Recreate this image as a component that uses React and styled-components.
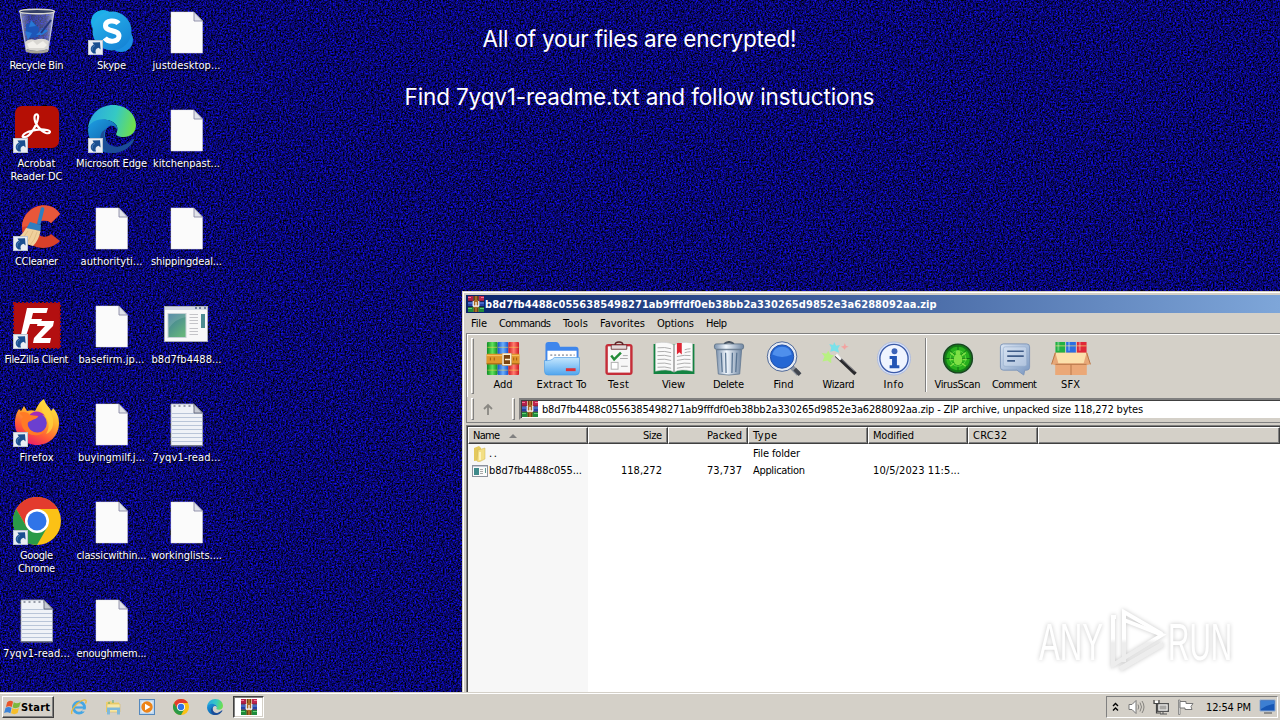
import React, { useLayoutEffect, useRef, useState } from 'react';
import styled, { createGlobalStyle } from 'styled-components';

const GlobalStyle = createGlobalStyle`
  * {
    box-sizing: border-box;
  }

  body {
    margin: 0;
    overflow: hidden;
    font-family: 'DejaVu Sans Condensed', 'DejaVu Sans', sans-serif;
    font-size: 11px;
    line-height: 13px;
    color: #000;
  }
`;

const Screen = styled.div`
  position: relative;
  display: flex;
  flex-direction: column;
  width: 1280px;
  height: 720px;
  overflow: hidden;
  background: #08056e;
`;

const Desktop = styled.main`
  position: relative;
  flex: 1;
  min-height: 0;
  overflow: hidden;
`;

const Noise = styled.svg`
  position: absolute;
  inset: 0;
  width: 100%;
  height: 100%;
`;

const IconGrid = styled.div`
  position: relative;
  display: grid;
  grid-template-rows: repeat(7, 98px);
  grid-auto-flow: column;
  grid-auto-columns: 75px;
  justify-content: start;
  padding-top: 7px;
`;

const Shortcut = styled.div`
  display: flex;
  flex-direction: column;
  align-items: center;
  width: 74px;
  color: #fff;
`;

const IconBox = styled.div`
  position: relative;
  width: 48px;
  height: 48px;
  margin-bottom: 4px;

  > svg {
    display: block;
  }
`;

const ArrowBadge = styled.svg`
  position: absolute;
  left: 0;
  bottom: 0;
`;

const Caption = styled.div`
  display: flex;
  flex-direction: column;
  align-items: center;
  margin-right: 1px;
  text-shadow: 1px 1px 1px #000;
`;

const FitSpan = styled.span`
  display: inline-block;
  white-space: pre;
`;

const Notice = styled.div`
  position: absolute;
  top: 24px;
  left: 400px;
  width: 479px;
  display: flex;
  flex-direction: column;
  align-items: center;
  gap: 28px;
  font-family: Inter, 'Liberation Sans', sans-serif;
  font-size: 22.5px;
  line-height: 30px;
  color: #fff;
`;

const Window = styled.section`
  position: absolute;
  left: 462px;
  top: 291px;
  right: 0;
  bottom: 0;
  display: flex;
  flex-direction: column;
  padding: 4px 0 0 4px;
  background: #d4d0c8;
  box-shadow: inset 1px 1px 0 #d4d0c8, inset 2px 2px 0 #fff;
`;

const TitleBar = styled.header`
  display: flex;
  align-items: center;
  height: 18px;
  padding-left: 2px;
  gap: 1px;
  color: #fff;
  font-weight: bold;
  background: linear-gradient(90deg, #0a246a, #7ea6d9);
`;

const MenuBar = styled.nav`
  display: flex;
  align-items: center;
  gap: 12px;
  height: 20px;
  padding: 0 0 0 5px;
`;

const ToolBar = styled.div`
  display: flex;
  height: 64px;
  padding: 4px 0 0 4px;
  border-top: 1px solid #808080;
  border-left: 1px solid #808080;
  box-shadow: inset 1px 1px 0 #fff;
`;

const Grip = styled.div`
  width: 3px;
  height: ${props => props.$height}px;
  border: 1px solid;
  border-color: #fff #808080 #808080 #fff;
`;

const ToolButton = styled.div`
  display: flex;
  flex-direction: column;
  align-items: center;
  width: ${props => props.$width || 55}px;
  padding-top: 3px;

  svg {
    display: block;
    height: 35px;
    margin-bottom: 2px;
  }
`;

const ToolDivider = styled.div`
  width: 2px;
  height: 54px;
  margin: 0 2px 0 4px;
  border-left: 1px solid #808080;
  border-right: 1px solid #fff;
`;

const AddressRow = styled.div`
  display: flex;
  align-items: flex-start;
  height: 26px;
  padding: 1px 0 0 4px;
  border-left: 1px solid #808080;
  border-bottom: 1px solid #808080;
`;

const UpButton = styled.div`
  width: 38px;
  padding: 5px 0 0 8px;

  svg {
    display: block;
  }
`;

const AddressField = styled.div`
  flex: 1;
  display: flex;
  align-items: center;
  height: 22px;
  margin-left: 4px;
  padding-left: 1px;
  gap: 4px;
  background: #fff;
  border: 2px solid;
  border-color: #808080 #fff #d4d0c8 #808080;
  border-right: 0;
  box-shadow: inset 1px 1px 0 #404040;
`;

const FileList = styled.div`
  flex: 1;
  margin: 2px 0 0 0;
  border-top: 1px solid #808080;
  border-left: 1px solid #808080;
  padding: 1px 0 0 1px;
  box-shadow: inset 1px 1px 0 #404040;
  background: linear-gradient(90deg, #f7f7f7 121px, #fff 121px);
`;

const ListRow = styled.div`
  display: grid;
  grid-template-columns: 120px 80px 80px 120px 100px 70px 1fr;
  height: 17px;
  margin-top: ${props => (props.$first ? '1px' : 0)};
`;

const HeadCell = styled.div`
  display: flex;
  align-items: center;
  gap: 9px;
  height: 17px;
  padding: 0 5px 0 4px;
  justify-content: ${props => (props.$right ? 'flex-end' : 'flex-start')};
  background: #d4d0c8;
  border: 1px solid;
  border-color: #fff #404040 #404040 #fff;
  box-shadow: inset -1px -1px 0 #808080;
`;

const Cell = styled.div`
  display: flex;
  align-items: center;
  gap: 1px;
  padding: 0 6px 0 ${props => (props.$name ? 4 : 5)}px;
  justify-content: ${props => (props.$right ? 'flex-end' : 'flex-start')};
`;

const Watermark = styled.svg`
  position: absolute;
  left: 1030px;
  top: 600px;
  filter: drop-shadow(0 0 2px rgba(0, 0, 0, 0.22));
`;

const TaskBar = styled.footer`
  position: relative;
  display: flex;
  align-items: center;
  height: 28px;
  padding: 2px 2px 0 2px;
  background: #d4d0c8;
  box-shadow: inset 0 1px 0 #d4d0c8, inset 0 2px 0 #fff;
`;

const StartButton = styled.button`
  display: flex;
  align-items: center;
  gap: 0;
  width: 52px;
  height: 22px;
  padding: 0 0 0 1px;
  font: bold 11px/13px 'DejaVu Sans Condensed', 'DejaVu Sans', sans-serif;
  color: #000;
  background: #d4d0c8;
  border: 1px solid;
  border-color: #fff #404040 #404040 #fff;
  box-shadow: inset -1px -1px 0 #808080;
`;

const QuickLaunch = styled.div`
  display: flex;
  gap: 18px;
  margin: 0 10px 0 17px;
`;

const TaskButton = styled.div`
  display: flex;
  align-items: center;
  justify-content: center;
  width: 31px;
  height: 22px;
  background: #fff;
  border: 1px solid;
  border-color: #404040 #fff #fff #404040;
  box-shadow: inset 1px 1px 0 #808080, inset -1px -1px 0 #d4d0c8;
`;

const Tray = styled.div`
  display: flex;
  align-items: center;
  width: 172px;
  height: 22px;
  margin-left: auto;
  padding-left: 5px;
  border: 1px solid;
  border-color: #808080 #fff #fff #808080;
`;

const TrayIcon = styled.svg`
  margin-right: ${props => props.$gap}px;
`;

// Spreads the letters of a text so that it takes exactly the given width
const FitText = ({ width, children }) => {
  const ref = useRef(null);
  const [spacing, setSpacing] = useState(0);

  useLayoutEffect(() => {
    const natural = ref.current.getBoundingClientRect().width;
    setSpacing((width - natural) / Math.max(1, children.length - 1));
  }, []);

  return (
    <FitSpan ref={ref} style={{ letterSpacing: spacing, marginRight: -spacing }}>
      {children}
    </FitSpan>
  );
};

const ShortcutArrow = () => (
  <ArrowBadge width="15" height="15" viewBox="0 0 15 15">
    <rect x=".5" y=".5" width="14" height="14" fill="#e9edf3" stroke="#bcc5d2" />
    <path d="M5.500 13.500C1.800 11.500 1.800 6.500 5.800 4.800L4.500 2.500L12 2.200L12.600 9.500L10.600 7.800C7.800 8.600 6.800 10.500 8 13.500Z" fill="#1a4f90" />
    <path d="M4.200 10.500C3.800 8 5 6.200 7 5.500" fill="none" stroke="#5b8cc4" strokeWidth=".8" />
  </ArrowBadge>
);

const RecycleBin = () => (
  <svg width="48" height="48" viewBox="0 0 48 48">
    <defs>
      <linearGradient id="bin" x1="0" x2="1">
        <stop offset="0" stopColor="#c3cbe0" stopOpacity=".75" />
        <stop offset=".3" stopColor="#5d6bb0" stopOpacity=".55" />
        <stop offset=".75" stopColor="#7c88c0" stopOpacity=".6" />
        <stop offset="1" stopColor="#d5dae8" stopOpacity=".85" />
      </linearGradient>
    </defs>
    <path d="M6.500 4.500L41.500 4.500L35.500 44Q24 48 12.500 44Z" fill="url(#bin)" />
    <path d="M13 17L20 15L26 21L25 30L17 31L13 26Z" fill="#1d55b8" />
    <path d="M18 13l5 6-7 1zM12 24l7 2-4 7zM23 28l7-7 5 3-6 4z" fill="#2878d6" />
    <path d="M28 26L38 13" stroke="#25357d" strokeWidth="2" />
    <path d="M12 35Q16 31 22 33Q30 30 36 34L35 42Q24 46 13 42Z" fill="#d8d6d2" />
    <path d="M14 37l6-3 4 4 6-4 4 4-3 3H16z" fill="#f1efeb" />
    <path d="M12.500 42Q24 46 35.500 42L35 45Q24 48 13 45Z" fill="#a6a398" />
    <ellipse cx="24" cy="4.500" rx="17.500" ry="2.300" fill="#343f66" stroke="#d9d8cf" strokeWidth="1.400" />
    <path d="M7.300 6L13.300 43M40.700 6L35 43" stroke="#dde1ee" strokeOpacity=".7" />
  </svg>
);

const Skype = () => (
  <svg width="48" height="48" viewBox="0 0 48 48">
    <defs>
      <linearGradient id="sky" x1="0" y1="0" x2=".7" y2="1">
        <stop offset="0" stopColor="#28b9ee" />
        <stop offset="1" stopColor="#1584d6" />
      </linearGradient>
    </defs>
    <circle cx="15" cy="15" r="12" fill="#1cafea" />
    <circle cx="33" cy="33" r="12" fill="#1a8fe0" />
    <circle cx="24" cy="24" r="19.500" fill="url(#sky)" />
    <path d="M30.500 16.500C28 13 17.500 12.500 17.500 18.800C17.500 25.500 31 22 31 29C31 35.500 20 35.500 16.800 31" fill="none" stroke="#fff" strokeWidth="5" />
  </svg>
);

const Acrobat = () => (
  <svg width="48" height="48" viewBox="0 0 48 48">
    <rect x="2" y="1" width="44" height="42" rx="7" fill="#b50f05" />
    <path d="M12 32C7 33 10 28 18 26C23 24.500 29 24 34 25C39 26 37 29 33 28C27 26 21 18 21.500 12C22 8 26 8.500 25 13C24 20 17 32 12 32Z" fill="none" stroke="#fff" strokeWidth="2.200" />
  </svg>
);

const Edge = ({ size = 48, id = 'e' }) => (
  <svg width={size} height={size} viewBox="0 0 48 48">
    <defs>
      <linearGradient id={`${id}t`} x1="0" y1=".3" x2="1" y2=".5">
        <stop offset="0" stopColor="#2aa7e0" />
        <stop offset=".55" stopColor="#35c9c4" />
        <stop offset="1" stopColor="#6fe04b" />
      </linearGradient>
      <linearGradient id={`${id}b`} x1="0" y1="0" x2=".7" y2="1">
        <stop offset="0" stopColor="#1e9fe3" />
        <stop offset="1" stopColor="#0c59a4" />
      </linearGradient>
    </defs>
    <path d="M0 23C2 9 12 0 25 0C39 0 48 10 48 20C48 28 42 32 36 32C30 32 27 30 28.500 28C32 21 26 16 19 15C11 14 4 17 0 23Z" fill={`url(#${id}t)`} />
    <path d="M0 24C2 17 9 13.500 17 14.500C25 15.500 30 20 29.500 25C26 18 18 20 17 28C16 38 28 48 22 48C9 47 0 37 0 24Z" fill={`url(#${id}b)`} />
    <path d="M18.500 23C12 31 20 45 33 41C38 39.500 43 36 45 34C46 33 46.500 35 45.500 36.500C40 45 31 49 22 48C13 46 10 34 14 27Z" fill="#1b4c98" />
  </svg>
);

const CCleaner = () => (
  <svg width="48" height="48" viewBox="0 0 48 48">
    <path d="M47 11L38 20C33 15 23 18 23 26C23 34 34 36 38 31L47 38C34 51 9 45 9 25C9 2 37-5 47 11Z" fill="#d8402a" />
    <path d="M47 11L38 20C33 15 23 18 23 22L9 24C10 3 37-5 47 11Z" fill="#e8573a" />
    <path d="M29.500 6L26 20" stroke="#2d7fc2" strokeWidth="3.600" strokeLinecap="round" />
    <path d="M17 19L28 22L27.500 28L13 26Z" fill="#2f7ec0" />
    <path d="M13 25L27.500 28Q26 37 20 43Q9 40 1 37Q9 33 13 25Z" fill="#f0d09c" />
    <path d="M15 28Q11 35 6 38M20 28Q17 36 13 41M24 29Q22 37 17 42" stroke="#dbb47a" strokeWidth=".7" fill="none" />
  </svg>
);

const FileZilla = () => (
  <svg width="48" height="48" viewBox="0 0 48 48">
    <rect x="1" y="2" width="46" height="45" fill="#b30f10" stroke="#a30d0e" strokeWidth="2" strokeDasharray="2 2" />
    <path d="M14 7H35L33.500 12H20L18.500 18H29L27.500 23H17L12 38H7Z" fill="#fff" />
    <path d="M25 20H41L40 25L28 37H38L37 42H20L21 37L32 25H24Z" fill="#fff" />
  </svg>
);

const Firefox = () => (
  <svg width="48" height="48" viewBox="0 0 48 48">
    <defs>
      <linearGradient id="fox" x1=".8" y1="0" x2=".3" y2="1">
        <stop offset="0" stopColor="#fff04a" />
        <stop offset=".4" stopColor="#ffb02e" />
        <stop offset=".72" stopColor="#ff5a36" />
        <stop offset="1" stopColor="#e8186e" />
      </linearGradient>
    </defs>
    <path d="M31 0C33 7 37 8 38 12C40 10 40 9 40 9C45 14 46 20 46 24C46 37 36 46 24 46C12 46 2 37 2 24C2 17 4 13 6 10L8 12L11 7L14 12C17 11 20 11 22 12C24 8 27 2 31 0Z" fill="url(#fox)" />
    <circle cx="24" cy="24" r="9.800" fill="#6b3fd0" />
    <path d="M16 17C19 11 28 11 32 17C29 15 27 16 26 18Z" fill="#a22bb8" />
    <path d="M6 14C10 12 15 13 17 16L25 17C25 20 20 20 18 22C15 22 14 25 15 27C18 35 28 35 32 31C29 39 13 38 9 27C8 23 8 20 10 18Z" fill="#ff7a26" />
    <path d="M31 1C32 10 42 14 40 26C39 31 36 34 33 35C37 29 36 23 33 18C30 14 26 10 31 1Z" fill="#ffd23c" fillOpacity=".8" />
  </svg>
);

const Chrome = ({ size = 48 }) => (
  <svg width={size} height={size} viewBox="0 0 48 48">
    <circle cx="24" cy="24" r="24" fill="#fbc116" />
    <path d="M24 12H44.800A24 24 0 0 0 3.200 12L13.600 30Z" fill="#e33b2e" />
    <path d="M3.200 12L13.600 30L34.400 30L24 48A24 24 0 0 1 3.200 12Z" fill="#2a9a48" />
    <circle cx="24" cy="24" r="12" fill="#fff" />
    <circle cx="24" cy="24" r="9.500" fill="#2f74e8" />
  </svg>
);

const Page = () => (
  <svg width="48" height="48" viewBox="0 0 48 48">
    <path d="M8 5H31L39.500 14V46H8Z" fill="#fbfbfb" stroke="#d8d8e0" strokeWidth=".5" />
    <path d="M31 5V14H39.500Z" fill="#e1e3ea" stroke="#7d7f9c" strokeWidth=".8" />
  </svg>
);

const TextPage = () => (
  <svg width="48" height="48" viewBox="0 0 48 48">
    <path d="M8 5H31L39.500 14V47H8Z" fill="#eff2f7" stroke="#9fa5b4" strokeWidth=".8" />
    <path d="M9 14.500H39M9 18.500H39M9 22.500H39M9 26.500H39M9 30.500H39M9 34.500H39M9 38.500H39M9 42.500H39" stroke="#b9c5d8" />
    <path d="M10.500 7H31" stroke="#7b8090" strokeWidth="1.500" strokeDasharray="2 3" />
    <path d="M31 5V14H39.500Z" fill="#c5c9d2" stroke="#62677a" strokeWidth=".9" />
    <path d="M8 46.500H39.500" stroke="#777d8c" />
  </svg>
);

const AppWindow = ({ width = 48, height = 48, viewBox = '0 0 48 48', id = 'app' }) => (
  <svg width={width} height={height} viewBox={viewBox}>
    <defs>
      <linearGradient id={id} x1="0" y1="0" x2=".7" y2="1">
        <stop offset="0" stopColor="#3c789c" />
        <stop offset="1" stopColor="#66b57c" />
      </linearGradient>
    </defs>
    <rect x="1.500" y="5.500" width="43" height="35" fill="#f8f8f8" stroke="#a9adb5" />
    <path d="M2 7.500H44" stroke="#d5dae3" strokeWidth="3" />
    <path d="M32 7H34M36 7H38M41 7H43" stroke="#4e5f86" strokeWidth="1.500" />
    <rect x="5" y="12.500" width="18" height="24" fill={`url(#${id})`} stroke="#c5d0d4" />
    <path d="M6 27Q12 18 23 16V13H6Z" fill="#fff" fillOpacity=".15" />
    <path d="M26.500 13.500H35M26.500 16.500H35M26.500 19.500H35M26.500 22.500H35M26.500 27.500H35M26.500 30.500H35M26.500 33.500H35" stroke="#c4c4c8" />
    <rect x="38" y="13" width="4" height="14" fill="#4c8c92" />
  </svg>
);

const AppSmall = () => (
  <svg width="16" height="14" viewBox="0 0 16 14">
    <rect x=".5" y="1.500" width="15" height="11" fill="#fafafa" stroke="#8d929c" />
    <path d="M1 2.500H15" stroke="#c3c9d6" />
    <rect x="2" y="4" width="5" height="7" fill="#3f8a8a" />
    <path d="M8 5.500H11M8 7.500H11M8 9.500H11" stroke="#aaa" />
    <path d="M13.500 4V9" stroke="#5c9a96" />
  </svg>
);

const RarSmall = ({ size = 16 }) => (
  <svg width={size} height={size} viewBox="0 0 16 16">
    <path d="M0 0H5V5H0Z" fill="#b3204a" />
    <path d="M11 0H16V5H11Z" fill="#c0264e" />
    <path d="M0 5.500H16V10.500H0Z" fill="#2443a4" />
    <path d="M0 11H16V16H0Z" fill="#1f8a3c" />
    <path d="M5.500 0H10.500V16H5.500Z" fill="#a96a24" />
    <path d="M0 1.500H3M13 1.500H16" stroke="#f07c9a" />
    <path d="M0 7H4M12 7H16" stroke="#6a90e8" />
    <path d="M0 12.500H4M12 12.500H16" stroke="#63d070" />
    <path d="M5.200 5V10.200H10.800V5M8 6V10" stroke="#fff" strokeWidth="1.200" fill="none" />
    <path d="M6.500 0V4M9.500 0V4M6.500 12V16M9.500 12V16" stroke="#593410" strokeWidth=".7" />
    <path d="M0 5.200H4.500M11.500 5.200H16M0 10.700H5M11 10.700H16" stroke="#220f2a" strokeWidth=".7" />
  </svg>
);

const Add = () => (
  <svg width="36" height="36" viewBox="0 0 36 36">
    <defs>
      {[['bg', '#0e8c23', '#62e35e'], ['bb', '#1553cf', '#6db0fa'], ['br', '#cf1620', '#ff7d6f']].map(([id, dark, light]) => (
        <linearGradient key={id} id={id} x1="0" x2="1">
          <stop offset="0" stopColor={dark} />
          <stop offset=".5" stopColor={light} />
          <stop offset="1" stopColor={dark} />
        </linearGradient>
      ))}
    </defs>
    <rect x="1.500" y="1" width="11" height="34" rx="1" fill="url(#bg)" />
    <rect x="12.500" y="1" width="11" height="34" rx="1" fill="url(#bb)" />
    <rect x="23.500" y="1" width="11" height="34" rx="1" fill="url(#br)" />
    <path d="M2 6.500H12M13 6.500H23M24 6.500H34M2 30H12M13 30H23M24 30H34" stroke="#f4d44e" strokeOpacity=".6" />
    <rect x="1" y="13" width="34" height="11" rx="1.500" fill="#e0962c" />
    <path d="M1 15H35" stroke="#f8c468" />
    <path d="M1 23.500H35" stroke="#9a5d12" />
    <path d="M5 17V20M9 17V20M29 17V20M32 17V20" stroke="#9f5710" />
    <path d="M17 12.500H27V25.500H17Z" fill="#7c4511" />
    <path d="M18 13.500H26V24.500H18ZM20 19H26" stroke="#fff2d2" strokeWidth="1.600" fill="none" />
  </svg>
);

const Extract = () => (
  <svg width="38" height="36" viewBox="0 0 38 36">
    <defs>
      <linearGradient id="fold" x1="0" y1="0" x2="0" y2="1">
        <stop offset="0" stopColor="#c4e7fe" />
        <stop offset="1" stopColor="#50a5ee" />
      </linearGradient>
    </defs>
    <path d="M2 33V4Q2 1 5 1H13Q15 1 16 3L17 6H33Q36 6 36 9V33Z" fill="#3e86ec" />
    <path d="M4 10H34V22H4Z" fill="#fff" />
    <path d="M7 14.500H32" stroke="#a4a9b3" strokeWidth="2" strokeDasharray="2 2" />
    <path d="M1 20Q8 21 11 17H37V31Q37 35 33 35H5Q1 35 1 31Z" fill="url(#fold)" stroke="#4c9ce5" strokeWidth=".7" />
    <rect x="23" y="28" width="10" height="3" fill="#dc3038" />
  </svg>
);

const Test = () => (
  <svg width="30" height="36" viewBox="0 0 30 36">
    <rect x="1" y="3" width="28" height="32" rx="3" fill="#c52d38" />
    <rect x="3.500" y="5.500" width="23" height="27" fill="#f7f7f7" />
    <path d="M7 4H23V8.500H7Z" fill="#e5dada" stroke="#571e22" strokeWidth=".8" />
    <path d="M11 4Q11 1 15 1Q19 1 19 4" fill="none" stroke="#5d2024" strokeWidth="1.500" />
    <path d="M7 15L10 19L17 12" stroke="#238b38" strokeWidth="2.500" fill="none" />
    <path d="M19 15H24M16 18H24M17 26H24" stroke="#aaa" />
    <rect x="7" y="22" width="7" height="7" fill="#fff" stroke="#b0b0b0" />
  </svg>
);

const View = () => (
  <svg width="44" height="36" viewBox="0 0 44 36">
    <path d="M1 3H43V34H1Z" fill="#138341" />
    <path d="M3 2Q16 0 22 4Q28 0 41 2V31Q28 28 22 32Q16 28 3 31Z" fill="#fafafa" stroke="#c6c6c6" strokeWidth=".6" />
    <path d="M22 4V32" stroke="#929292" strokeWidth="1.400" />
    <path d="M5 7Q13 6 19 8M5 11Q13 10 19 12M5 15Q13 14 19 16M5 19Q13 18 19 20M5 23Q13 22 19 24M5 27Q13 26 19 28M25 16Q33 14 39 15M25 20Q33 18 39 19M25 24Q33 22 39 23M25 28Q33 26 39 27M33 9Q36 8 39 8M33 12Q36 11 39 11" stroke="#ababab" fill="none" />
    <path d="M25 2H30V14L27.500 11.500L25 14Z" fill="#df2534" />
  </svg>
);

const Delete = () => (
  <svg width="32" height="36" viewBox="0 0 32 36">
    <defs>
      <linearGradient id="can" x1="0" x2="1">
        <stop offset="0" stopColor="#7c92ad" />
        <stop offset=".4" stopColor="#f2f8fe" />
        <stop offset="1" stopColor="#6f86a2" />
      </linearGradient>
    </defs>
    <path d="M11 3Q16-1 21 3" fill="none" stroke="#4b5563" strokeWidth="2" />
    <path d="M3 9H29L27 34Q16 36 5 34Z" fill="url(#can)" stroke="#62778f" strokeWidth=".8" />
    <path d="M8 12L9 32M12.500 12L13 33M19.500 12L19 33M24 12L23 32" stroke="#587391" strokeWidth="1.300" />
    <rect x="1" y="3" width="30" height="5.500" rx="2" fill="url(#can)" stroke="#546980" strokeWidth=".8" />
  </svg>
);

const Find = () => (
  <svg width="36" height="36" viewBox="0 0 36 36">
    <path d="M24 25L33 34" stroke="#8c929c" strokeWidth="5" />
    <path d="M29 29L34.500 34.500" stroke="#42464e" strokeWidth="4" />
    <circle cx="16" cy="16" r="13.500" fill="#2567d4" stroke="#e5eaf3" strokeWidth="3" />
    <circle cx="16" cy="16" r="15.200" fill="none" stroke="#294b89" strokeWidth=".8" />
    <circle cx="16" cy="16" r="12" fill="none" stroke="#214da3" />
    <path d="M6 14Q8 6 16 6Q24 6 26 14Q16 19 6 14Z" fill="#4f8fec" />
  </svg>
);

const Wizard = () => (
  <svg width="36" height="36" viewBox="0 0 36 36">
    <path d="M15 15L35 34" stroke="#29292c" strokeWidth="3.600" />
    <path d="M15 14L20 19" stroke="#fafafa" strokeWidth="3" />
    <path d="M20 18L34 31" stroke="#88888e" />
    <path d="M13 1L15 5L19 4L17 8L18 12L13 10L9 11L10 7L8 3L12 4Z" fill="#7ae1e9" />
    <path d="M7 10L9 14L13 15L10 18L10 23L6 20L1 21L3 16L0 12L5 13Z" fill="#b8f082" />
    <path d="M24 2L25 5L28 6L25 7L24 9L22 7L20 6L23 5Z" fill="#f2a3a0" />
  </svg>
);

const Info = () => (
  <svg width="36" height="36" viewBox="0 0 36 36">
    <circle cx="18" cy="18" r="17" fill="#d7e2fa" stroke="#aebbdc" />
    <circle cx="18" cy="18" r="14.500" fill="#eff4ff" stroke="#3c5ba8" strokeWidth="1.400" />
    <circle cx="18.500" cy="10.500" r="3" fill="#3b62b8" />
    <path d="M13.500 15.500H21V25H23.500V28H13.500V25H16V18.500H13.500Z" fill="#2355b5" />
  </svg>
);

const VirusScan = () => (
  <svg width="34" height="36" viewBox="0 0 34 36">
    <circle cx="17" cy="18" r="16.500" fill="#cbd6ce" />
    <circle cx="17" cy="18" r="14.800" fill="#137a18" stroke="#1c4321" strokeWidth="1.500" />
    <circle cx="17" cy="18" r="12" fill="#28b01d" />
    <path d="M17 5V31M4 18H30M8 9L26 27M26 9L8 27" stroke="#0e6d13" />
    <circle cx="17" cy="18" r="8" fill="none" stroke="#5bd340" />
    <ellipse cx="17" cy="19" rx="4.500" ry="6" fill="#7fe045" />
    <circle cx="17" cy="12" r="2.500" fill="#7fe045" />
    <path d="M13 15L9 12M21 15L25 12M12 19H8M22 19H26M13 23L9 26M21 23L25 26" stroke="#7fe045" strokeWidth="1.500" />
  </svg>
);

const Comment = () => (
  <svg width="34" height="36" viewBox="0 0 34 36">
    <defs>
      <linearGradient id="talk" x1="0" y1="0" x2="1" y2="1">
        <stop offset="0" stopColor="#dbe6f4" />
        <stop offset="1" stopColor="#7896c0" />
      </linearGradient>
    </defs>
    <path d="M5 3H29Q32 3 32 6V27Q32 30 29 30H27L26 35L19 30H5Q2 30 2 27V6Q2 3 5 3Z" fill="url(#talk)" stroke="#7f97ba" />
    <rect x="5" y="6" width="24" height="20" rx="2" fill="#d6e2f2" fillOpacity=".5" stroke="#93aaca" strokeWidth=".6" />
    <path d="M9 10.500H26M9 15.500H26M9 20.500H17" stroke="#3f5c88" strokeWidth="1.700" />
  </svg>
);

const Sfx = () => (
  <svg width="42" height="36" viewBox="0 0 42 36">
    <rect x="5" y="1" width="10" height="14" fill="#22b144" />
    <rect x="16" y="1" width="10" height="14" fill="#2a6ee2" />
    <rect x="27" y="1" width="10" height="14" fill="#df2838" />
    <path d="M5 5H15M27 5H37M16 5H26" stroke="#f5dc78" strokeOpacity=".7" />
    <path d="M8 1V10M19 1V10M30 1V10" stroke="#fff" strokeOpacity=".3" strokeWidth="2" />
    <path d="M4 12H38L41 24L37 25V35H5V25L1 24Z" fill="#e7a878" />
    <path d="M5 12H37L34 23H8Z" fill="#fbe0ac" />
    <path d="M5 24H37V35H5Z" fill="#eba877" />
    <path d="M21 24V35M5 24H37M5 12L1 24M37 12L41 24" stroke="#b77749" />
  </svg>
);

const Folder = () => (
  <svg width="16" height="16" viewBox="0 0 16 16">
    <path d="M2 2L7 0L9 2V14L2 15Z" fill="#e4c95c" />
    <path d="M6 4L13 2V13L7 16L5 15Z" fill="#f3df84" stroke="#cfb450" strokeWidth=".5" />
    <path d="M8 6V14" stroke="#fff8cf" strokeWidth="1.500" />
  </svg>
);

const StartFlag = () => (
  <svg width="17" height="17" viewBox="0 0 16 16">
    <path d="M3 3Q6 .5 8.500 2.500L7.300 7.500Q5 6 1.800 7.500Z" fill="#e8552a" />
    <path d="M9.200 3Q12 5 15.700 2.800L14.300 7.600Q11 9.500 8 7.800Z" fill="#7cb83c" />
    <path d="M1.500 8.200Q4.500 6.800 7.100 8.300L6 13.300Q3 11.500.1 13.200Z" fill="#3b83d8" />
    <path d="M7.800 8.500Q11 10.400 14.100 8.400L12.800 13.200Q10 15.200 6.600 13.500Z" fill="#f6be2b" />
  </svg>
);

const Explorer = () => (
  <svg width="16" height="16" viewBox="0 0 16 16">
    <circle cx="8" cy="8.500" r="5.600" fill="none" stroke="#45a6e4" strokeWidth="2.800" />
    <path d="M4 8.500H14" stroke="#45a6e4" strokeWidth="2.200" />
    <path d="M11.500 10.600H16V12.500H11Z" fill="#d4d0c8" />
    <path d="M1 15C-1 12 5 4 11 1.500C15 0 16 1.500 14.500 4.500" fill="none" stroke="#e9b93c" strokeWidth="1.300" />
  </svg>
);

const Library = () => (
  <svg width="16" height="16" viewBox="0 0 16 16">
    <path d="M1 3L6 2L7 3.500H14V13H1Z" fill="#edcf6e" />
    <path d="M2 5H15V13H2Z" fill="#f8e7a4" stroke="#d8b650" strokeWidth=".5" />
    <path d="M2 8.500H15V15.500H12V11H5V15.500H2Z" fill="#80b9d9" />
    <path d="M8 1V4M4 3V5" stroke="#61aa6b" />
  </svg>
);

const Player = () => (
  <svg width="16" height="16" viewBox="0 0 16 16">
    <rect x=".5" y=".5" width="15" height="15" fill="#bcd6ee" stroke="#5488bd" />
    <rect x="2.500" y="2.500" width="11" height="11" fill="#e9f0f6" />
    <circle cx="8" cy="8" r="5.700" fill="#ed8418" />
    <path d="M6 4.700L11.500 8L6 11.300Z" fill="#fff" />
  </svg>
);

const shortcuts = [
  { icon: <RecycleBin />, lines: [['Recycle Bin', 54]] },
  { icon: <Acrobat />, link: true, lines: [['Acrobat', 38], ['Reader DC', 52]] },
  { icon: <CCleaner />, link: true, lines: [['CCleaner', 43]] },
  { icon: <FileZilla />, link: true, lines: [['FileZilla Client', 64]] },
  { icon: <Firefox />, link: true, lines: [['Firefox', 34]] },
  { icon: <Chrome />, link: true, lines: [['Google', 33], ['Chrome', 37]] },
  { icon: <TextPage />, lines: [['7yqv1-read...', 67]] },
  { icon: <Skype />, link: true, lines: [['Skype', 29]] },
  { icon: <Edge />, link: true, lines: [['Microsoft Edge', 71]] },
  { icon: <Page />, lines: [['authorityti...', 62]] },
  { icon: <Page />, lines: [['basefirm.jp...', 66]] },
  { icon: <Page />, lines: [['buyingmilf.j...', 67]] },
  { icon: <Page />, lines: [['classicwithin...', 70]] },
  { icon: <Page />, lines: [['enoughmem...', 70]] },
  { icon: <Page />, lines: [['justdesktop...', 68]] },
  { icon: <Page />, lines: [['kitchenpast...', 67]] },
  { icon: <Page />, lines: [['shippingdeal...', 71]] },
  { icon: <AppWindow />, lines: [['b8d7fb4488...', 70]] },
  { icon: <TextPage />, lines: [['7yqv1-read...', 68]] },
  { icon: <Page />, lines: [['workinglists....', 71]] },
];

const menus = [['File', 16], ['Commands', 52], ['Tools', 25], ['Favorites', 45], ['Options', 37], ['Help', 21]];

const tools = [
  { icon: <Add />, label: ['Add', 19], width: 58 },
  { icon: <Extract />, label: ['Extract To', 50], width: 59 },
  { icon: <Test />, label: ['Test', 21] },
  { icon: <View />, label: ['View', 23] },
  { icon: <Delete />, label: ['Delete', 31] },
  { icon: <Find />, label: ['Find', 20] },
  { icon: <Wizard />, label: ['Wizard', 32] },
  { icon: <Info />, label: ['Info', 20] },
];

const extraTools = [
  { icon: <VirusScan />, label: ['VirusScan', 46], width: 57 },
  { icon: <Comment />, label: ['Comment', 45], width: 57 },
  { icon: <Sfx />, label: ['SFX', 19] },
];

const renderTool = ({ icon, label, width }) => (
  <ToolButton key={label[0]} $width={width}>
    {icon}
    <FitText width={label[1]}>{label[0]}</FitText>
  </ToolButton>
);

const ArchiveWindow = () => (
  <Window>
    <TitleBar>
      <RarSmall />
      <FitText width={451}>b8d7fb4488c0556385498271ab9fffdf0eb38bb2a330265d9852e3a6288092aa.zip</FitText>
    </TitleBar>
    <MenuBar>
      {menus.map(([name, width]) => (
        <FitText key={name} width={width}>{name}</FitText>
      ))}
    </MenuBar>
    <ToolBar>
      <Grip $height={56} />
      {tools.map(renderTool)}
      <ToolDivider />
      {extraTools.map(renderTool)}
    </ToolBar>
    <AddressRow>
      <Grip $height={22} />
      <UpButton>
        <svg width="12" height="14" viewBox="0 0 12 14">
          <path d="M6 12V2M2 6L6 2L10 6" fill="none" stroke="#8a8883" strokeWidth="1.800" />
        </svg>
      </UpButton>
      <Grip $height={22} />
      <AddressField>
        <RarSmall />
        <FitText width={601}>
          {'b8d7fb4488c0556385498271ab9fffdf0eb38bb2a330265d9852e3a6288092aa.zip - ZIP archive, unpacked size 118,272 bytes'}
        </FitText>
      </AddressField>
    </AddressRow>
    <FileList>
      <ListRow>
        <HeadCell>
          <FitText width={27}>Name</FitText>
          <svg width="8" height="4" viewBox="0 0 8 4">
            <path d="M0 4L4 0L8 4Z" fill="#808080" />
          </svg>
        </HeadCell>
        <HeadCell $right><FitText width={19}>Size</FitText></HeadCell>
        <HeadCell $right><FitText width={35}>Packed</FitText></HeadCell>
        <HeadCell><FitText width={24}>Type</FitText></HeadCell>
        <HeadCell><FitText width={41}>Modified</FitText></HeadCell>
        <HeadCell><FitText width={34}>CRC32</FitText></HeadCell>
        <HeadCell />
      </ListRow>
      <ListRow $first>
        <Cell $name><Folder /> <FitText width={8}>..</FitText></Cell>
        <Cell />
        <Cell />
        <Cell><FitText width={47}>File folder</FitText></Cell>
      </ListRow>
      <ListRow>
        <Cell $name>
          <AppSmall />
          <FitText width={93}>b8d7fb4488c055...</FitText>
        </Cell>
        <Cell $right><FitText width={41}>118,272</FitText></Cell>
        <Cell $right><FitText width={35}>73,737</FitText></Cell>
        <Cell><FitText width={52}>Application</FitText></Cell>
        <Cell><FitText width={87}>10/5/2023 11:5...</FitText></Cell>
      </ListRow>
    </FileList>
  </Window>
);

const App = () => {
  return (
    <Screen>
      <GlobalStyle />
      <Desktop>
        <Noise>
          <filter id="grain" x="0" y="0" width="100%" height="100%" colorInterpolationFilters="sRGB">
            <feTurbulence type="fractalNoise" baseFrequency="0.6" numOctaves="2" seed="4" />
            <feColorMatrix values="0.15 0 0 0 -0.04  0.1 0 0 0 -0.02  1.8 0 0 0 -0.47  0 0 0 0 1" />
          </filter>
          <rect width="100%" height="100%" filter="url(#grain)" />
        </Noise>
        <Notice>
          <FitText width={314}>All of your files are encrypted!</FitText>
          <FitText width={470}>Find 7yqv1-readme.txt and follow instuctions</FitText>
        </Notice>
        <IconGrid>
          {shortcuts.map(({ icon, link, lines }, i) => (
            <Shortcut key={i}>
              <IconBox>
                {icon}
                {link && <ShortcutArrow />}
              </IconBox>
              <Caption>
                {lines.map(([text, width]) => (
                  <FitText key={text} width={width}>{text}</FitText>
                ))}
              </Caption>
            </Shortcut>
          ))}
        </IconGrid>
        <ArchiveWindow />
        <Watermark width="250" height="80" viewBox="0 0 250 80">
          <defs>
            <linearGradient id="fade" gradientUnits="userSpaceOnUse" x1="0" y1="39" x2="0" y2="43">
              <stop offset="0" stopColor="#fff" />
              <stop offset="1" stopColor="#ededed" />
            </linearGradient>
          </defs>
          <g fill="url(#fade)" fontFamily="Liberation Sans, sans-serif" fontSize="52">
            <text transform="translate(9 60) scale(.6 1)">ANY</text>
            <text transform="translate(138 60) scale(.57 1)">RUN</text>
          </g>
          <g fill="none" stroke="url(#fade)" strokeWidth="4">
            <path d="M94 62V12L132 34" />
            <path d="M86 17H83V65L94 58L132 35L94 20" />
            <path d="M90 69L133 44" strokeWidth="5" />
          </g>
        </Watermark>
      </Desktop>
      <TaskBar>
        <StartButton>
          <StartFlag />
          <FitText width={29}>Start</FitText>
        </StartButton>
        <QuickLaunch>
          <Explorer />
          <Library />
          <Player />
          <Chrome size={16} />
          <Edge size={16} id="es" />
        </QuickLaunch>
        <TaskButton>
          <RarSmall />
        </TaskButton>
        <Tray>
          <TrayIcon $gap={9} width="7" height="10" viewBox="0 0 7 10">
            <path d="M1 4L3.500 1.500L6 4M1 8.500L3.500 6L6 8.500" fill="none" stroke="#000" strokeWidth="1.400" />
          </TrayIcon>
          <TrayIcon $gap={8} width="17" height="16" viewBox="0 0 17 16">
            <path d="M1 5.500H4L8 1.500V14.500L4 10.500H1Z" fill="#fff" stroke="#777" />
            <path d="M10 5.500Q11.500 8 10 10.500M12 3.500Q15 8 12 12.500M14 2Q18 8 14 14" fill="none" stroke="#85837f" />
          </TrayIcon>
          <TrayIcon $gap={8} width="16" height="16" viewBox="0 0 16 16">
            <rect x="4.500" y="4.500" width="11" height="8" fill="#a8a7a4" stroke="#555" />
            <path d="M6 6H14V11H6Z" fill="none" stroke="#eee" />
            <path d="M7 15H14M10 13V15" stroke="#555" />
            <path d="M1 1V4.500H6V1M3.500 4V14H8" fill="none" stroke="#444" strokeWidth="1.200" />
            <path d="M2 2H5V4H2Z" fill="#fff" />
          </TrayIcon>
          <TrayIcon $gap={12} width="17" height="16" viewBox="0 0 17 16">
            <path d="M1.500 1V15.500H3V1Z" fill="#fff" stroke="#777" strokeWidth=".8" />
            <path d="M3 2.500H9V4.500H16L14 7.500L15 10.500H8V9H3Z" fill="#fff" stroke="#777" />
          </TrayIcon>
          <FitText width={45}>12:54 PM</FitText>
          <TrayIcon $gap={0} width="25" height="16" viewBox="-9 0 25 16">
            <path d="M0 1H15V12H0Z" fill="#1757b5" stroke="#8aa9d2" />
            <path d="M1 2H14V5Q7 6 1 10Z" fill="#3d7fd2" />
            <path d="M4 14H12" stroke="#777" strokeWidth="1.500" />
          </TrayIcon>
        </Tray>
      </TaskBar>
    </Screen>
  );
};

export default App;
